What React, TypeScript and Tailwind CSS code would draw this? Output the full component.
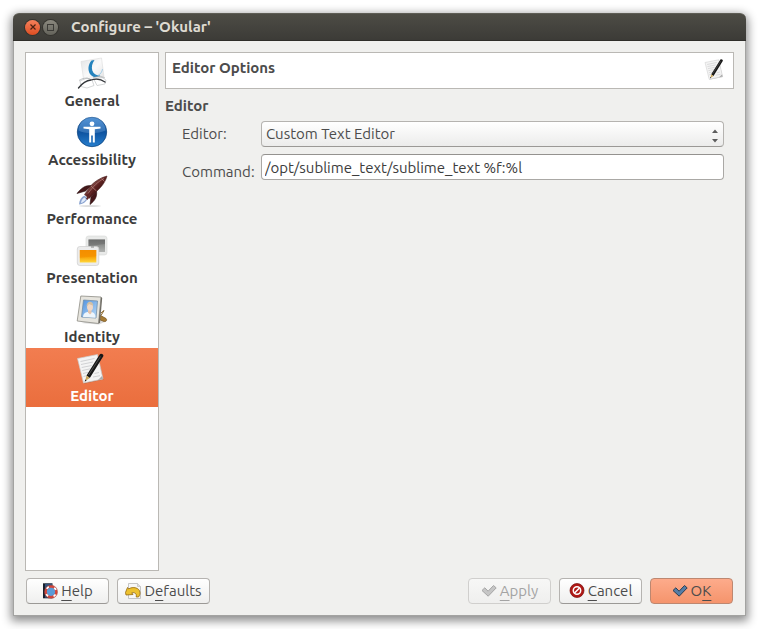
import { useState, type ReactNode } from 'react';

function OkularIcon() {
  return (
    <svg viewBox="0 0 32 32" className="size-8 overflow-visible" aria-hidden="true">
      <defs>
        <linearGradient id="okPage" x1="0" y1="0" x2="1" y2="1">
          <stop offset="0" stopColor="#e3e4e5" />
          <stop offset=".5" stopColor="#fafafa" />
          <stop offset="1" stopColor="#dfe0e1" />
        </linearGradient>
      </defs>
      <path d="M5 4.500 25.500 1l2.500 19-20 5z" fill="url(#okPage)" stroke="#dcdcdc" strokeWidth=".6" />
      <path d="M15.500 3.500C12 7.500 11.500 13 14 17c2.500 3.600 6.500 4 10.500 1.500-4 .2-7-1.500-8.200-5-1-3.200-.3-7 2.200-10.500z" fill="#2583bd" />
      <path d="M22 18.500c2.500-1.500 4-3.500 4.500-6.500" fill="none" stroke="#8fc3e2" strokeWidth=".8" />
      <path d="M4 24l7-3 5 2 2 5.500-7 2.500-6-1.500zM18 22.500l8-2 4 2.500-1 4-8 1.500z" fill="#fff" fillOpacity=".6" stroke="#c3c5c7" strokeWidth=".7" />
      <path d="M2.500 31c3.500-4.500 7.500-7.500 12.500-8 5-1.500 10-1 14 2" fill="none" stroke="#33363a" strokeWidth="1.300" strokeLinecap="round" />
      <path d="M3 23.500c4-2.500 7-3 11-1.500M17 21c4-2 8-2 12 0" fill="none" stroke="#a5a7a9" strokeWidth=".7" />
    </svg>
  );
}

function AccessibilityIcon() {
  return (
    <svg viewBox="0 0 32 32" className="size-8" aria-hidden="true">
      <defs>
        <linearGradient id="accDisc" x1="0" y1="0" x2="0" y2="1">
          <stop offset="0" stopColor="#3b83cd" />
          <stop offset=".5" stopColor="#0d529f" />
          <stop offset="1" stopColor="#277fce" />
        </linearGradient>
      </defs>
      <circle cx="16" cy="16" r="14.700" fill="url(#accDisc)" stroke="#114781" strokeWidth=".8" />
      <path d="M2.500 14.500a13.500 13.500 0 0 1 27 0c-6 3-20 4-27 0z" fill="#8dbdec" fillOpacity=".3" />
      <circle cx="16" cy="7.800" r="2.400" fill="#fff" />
      <path d="M7.500 10.700h17v1.700l-5.700.8v13.200h-2V19.500h-1.600v6.900h-2V13.200l-5.700-.8z" fill="#fff" />
    </svg>
  );
}

function RocketIcon() {
  return (
    <svg viewBox="0 0 32 32" className="size-8" aria-hidden="true">
      <defs>
        <linearGradient id="rocketBody" x1="0" y1="0" x2="1" y2="1">
          <stop offset=".2" stopColor="#a8736d" />
          <stop offset=".5" stopColor="#5e2322" />
          <stop offset=".8" stopColor="#260a0a" />
        </linearGradient>
      </defs>
      <ellipse cx="14" cy="31" rx="11" ry=".8" fill="#000" fillOpacity=".18" />
      <path d="M15.500 10.500C9 10 5 13.500 1 18.500l8.500-2.500zM20.500 16c1 6-2 10-6.500 13.500L15 22z" fill="#451719" stroke="#260b0b" strokeWidth=".6" />
      <path d="M8.500 20.500l3 3c-1 3-4 5.500-8.500 6 .3-4 2-7.500 5.500-9z" fill="#8ba4d0" />
      <path d="M8.500 22.500l1.500 1.500c-1 2-3 3.500-5 4 .2-2.500 1.500-4.500 3.500-5.500z" fill="#e1ebfb" />
      <path d="M31 1c-6.500 1.500-12.500 5.500-16.500 10L8.500 19.500l4.500 4 7.500-7C25.500 12 29.500 7 31 1z" fill="url(#rocketBody)" stroke="#3f1717" strokeWidth=".5" />
      <path d="M25.500 3.500l3 3M15 11l5.500 5" stroke="#bd8d86" strokeWidth=".7" />
      <path d="M28 3.500c-6 3-11 8-16 15" stroke="#bd8d86" strokeWidth=".6" fill="none" />
      <path d="M18 13.500l-8 10 1.500 1.500z" fill="#642b2a" />
    </svg>
  );
}

function PresentationIcon() {
  return (
    <svg viewBox="0 0 32 32" className="size-8" aria-hidden="true">
      <defs>
        <linearGradient id="slideGrey" x1="0" y1="0" x2="0" y2="1">
          <stop offset="0" stopColor="#737573" />
          <stop offset="1" stopColor="#b0b2b0" />
        </linearGradient>
        <linearGradient id="slideGold" x1="0" y1="0" x2="0" y2="1">
          <stop offset="0" stopColor="#f49200" />
          <stop offset=".5" stopColor="#f79b00" />
          <stop offset="1" stopColor="#ffd73a" />
        </linearGradient>
      </defs>
      <rect x="10" y="2" width="21" height="19" rx="2.500" fill="#e9eae9" stroke="#d6d8d6" strokeWidth=".6" />
      <rect x="12.500" y="5.500" width="16.500" height="12.500" fill="url(#slideGrey)" />
      <path d="M12.500 12l16.500-2V5.500H12.500z" fill="#5e605e" fillOpacity=".4" />
      <rect x="1.300" y="12.500" width="21.500" height="19" rx="2.500" fill="#ececec" stroke="#cfcfcf" strokeWidth=".7" />
      <rect x="3.800" y="16" width="16.500" height="12.500" fill="url(#slideGold)" />
      <path d="M3.800 24c5-1 11-1 16.500-2v-6H3.800z" fill="#f28600" fillOpacity=".3" />
      <path d="M15 13h3" stroke="#888" strokeWidth="1" />
    </svg>
  );
}

function IdentityIcon() {
  return (
    <svg viewBox="0 0 32 32" className="size-8" aria-hidden="true">
      <defs>
        <linearGradient id="photo" x1="0" y1="0" x2="1" y2="1">
          <stop offset="0" stopColor="#4f91df" />
          <stop offset="1" stopColor="#bcdbf5" />
        </linearGradient>
      </defs>
      <path d="M5 30l18 1.500 8-3.500-6-3z" fill="#000" fillOpacity=".15" />
      <path d="M22 21l8 4.500c1.500 1.500 0 3.500-2 3L22 26z" fill="#a77b34" stroke="#74511b" strokeWidth=".7" />
      <path d="M25 20l3-2.500-3 5" fill="none" stroke="#8a662a" strokeWidth="1" />
      <path d="M4.800 3 25 4l-2.500 26.500L1.200 28z" fill="#e6e4dd" stroke="#8d8b84" strokeWidth=".8" />
      <path d="M25 4l1.200 1L24 30l-1.500.5z" fill="#6f6c64" />
      <path d="M7.500 7l14 1-1.500 17L5.500 24z" fill="url(#photo)" stroke="#718eaa" strokeWidth=".8" />
      <path d="M7 24c0-3 2-4.500 4.500-5l5 .3c2 .8 3 2.500 3 5.500z" fill="#edf5fc" />
      <path d="M12 15.500h3.500V20l-1.500 1.500-2-2z" fill="#e5c4ad" />
      <ellipse cx="14" cy="14" rx="3" ry="3.800" fill="#f1d7c4" />
      <path d="M10.800 13.500c-.8-6 6.500-6.500 6.500-1-2-.3-3-1-4.200-1.500z" fill="#d3c0a4" />
    </svg>
  );
}

function EditorIcon({ small = false }: { small?: boolean }) {
  return (
    <svg viewBox="0 0 32 32" className={small ? 'size-[22px]' : 'size-8'} aria-hidden="true">
      <path d="M3 7 21.500 3l6 24.500L8 31.800z" fill="#000" fillOpacity=".2" />
      <path d="M1.500 6.500 21.500 2.500l5.500 24.500-19.500 4z" fill="#f4f4f4" stroke="#cbcbcb" strokeWidth=".7" />
      <path
        d="M4.500 9.500l14-3M5 12.500l12-2.500M5.700 15.500l10-2M6.300 18.500l8-1.700M7 21.500l5-1.200M7.500 24.500l3-.8M18.500 21.500l4.500-1M17 25l7-1.300"
        stroke="#cccdcf"
        strokeWidth=".9"
      />
      <path d="M27 27l-5 1 4-4z" fill="#aaa" />
      <path d="M10.500 23.500l13.200-21c1-1.600 4.500-.2 3.600 1.800L13.800 26z" fill="#171717" />
      <path d="M12.500 23l12-18.500" stroke="#666" strokeWidth=".7" />
      <path d="M10.500 23.500l3.300 2.500-4.600 3z" fill="#c7a65d" />
      <path d="M8.700 29.800l.5-2.300 1.500 1z" fill="#222" />
    </svg>
  );
}

function HelpIcon() {
  return (
    <svg viewBox="0 0 16 16" className="size-4" aria-hidden="true">
      <path d="M1 .3h9.500v15H1z" fill="#18202e" />
      <path d="M3 .8h7v14H3z" fill="#34537b" />
      <circle cx="9" cy="8.800" r="5" fill="#5a9bd8" />
      <circle cx="9" cy="8.800" r="5.300" fill="none" stroke="#d3463b" strokeWidth="2.400" />
      <circle cx="9" cy="8.800" r="5.300" fill="none" stroke="#fff" strokeWidth="1.900" strokeDasharray="2.600 5.725" strokeDashoffset="-2.860" />
      <circle cx="9" cy="8.800" r="6.600" fill="none" stroke="#a2453e" strokeWidth=".5" />
    </svg>
  );
}

function DefaultsIcon() {
  return (
    <svg viewBox="0 0 16 16" className="size-4" aria-hidden="true">
      <path d="M3.500.5h9l3 3v12h-12z" fill="#f7f7f7" stroke="#b8b8b8" strokeWidth=".8" />
      <path d="M12.500.5v3h3" fill="#ddd" stroke="#b8b8b8" strokeWidth=".6" />
      <path
        d="M.5 9.500l2-5 1.200 1.400c4-2.600 10.800-1.400 11.300 3.600.2 1.500-.4 3-1.500 4.500h-2.300c.8-3-1.200-5-4.500-4.200l1.300 1.700-7 .5z"
        fill="#edc12f"
        stroke="#94680b"
        strokeWidth=".8"
        strokeLinejoin="round"
      />
    </svg>
  );
}

function CheckIcon({ muted = false }: { muted?: boolean }) {
  return (
    <svg viewBox="0 0 16 16" className="size-4" aria-hidden="true">
      <path
        d="M1 7.500l2.800-2.700 3.300 3.400L12.500 2.500l2.700 2.400-8 8.300z"
        fill={muted ? '#c6c6c6' : '#557da6'}
        stroke={muted ? '#a6a6a6' : '#2c3d50'}
        strokeWidth="1"
        strokeLinejoin="round"
      />
    </svg>
  );
}

function CancelIcon() {
  return (
    <svg viewBox="0 0 16 16" className="size-4" aria-hidden="true">
      <circle cx="8" cy="7.500" r="7" fill="#b01815" stroke="#780d0b" strokeWidth=".7" />
      <circle cx="8" cy="7.500" r="3.700" fill="none" stroke="#fff" strokeWidth="1.500" />
      <path d="M5.500 10l5-5" stroke="#fff" strokeWidth="1.600" />
    </svg>
  );
}

const pages: { name: string; icon: ReactNode }[] = [
  { name: 'General', icon: <OkularIcon /> },
  { name: 'Accessibility', icon: <AccessibilityIcon /> },
  { name: 'Performance', icon: <RocketIcon /> },
  { name: 'Presentation', icon: <PresentationIcon /> },
  { name: 'Identity', icon: <IdentityIcon /> },
  { name: 'Editor', icon: <EditorIcon /> },
];

const buttonBase = 'flex h-[26px] items-center justify-center gap-[3px] rounded-[4px] border text-[15px] leading-5';
const buttonNormal = 'border-[#b5b3b0] border-b-[#9b9996] bg-linear-to-b from-white to-[#efefee] text-[#4c4c4c]';

function Key({ children }: { children: ReactNode }) {
  return <span className="underline decoration-1 underline-offset-4">{children}</span>;
}

export default function App() {
  const [page, setPage] = useState('Editor');
  const [command, setCommand] = useState('/opt/sublime_text/sublime_text %f:%l');

  return (
    <div className="flex min-h-screen bg-white p-[13px] font-['Ubuntu','Noto_Sans',sans-serif] text-[15px] leading-5 text-[#4c4c4c]">
      <div className="flex min-w-0 flex-1 flex-col rounded-t-[6px] bg-[#f0f0ee] shadow-[0_3px_10px_2px_rgba(0,0,0,0.45)]">
        <header className="flex h-7 shrink-0 items-center rounded-t-[6px] border-t border-b border-t-[#5e5d55] border-b-[#2f2e2a] bg-linear-to-b from-[#4d4c45] to-[#3c3b37] pl-3">
          <button
            type="button"
            aria-label="Close"
            className="flex size-[15px] items-center justify-center rounded-full bg-linear-to-b from-[#f6805a] to-[#dd4d20] ring-1 ring-[#34332e]"
          >
            <svg viewBox="0 0 8 8" className="size-2" aria-hidden="true">
              <path d="M1.500 1.500l5 5m0-5l-5 5" stroke="#4b2213" strokeWidth="1.200" />
            </svg>
          </button>
          <button
            type="button"
            aria-label="Maximize"
            className="ml-[3px] flex size-[15px] items-center justify-center rounded-full bg-linear-to-b from-[#8b897f] to-[#64635b] ring-1 ring-[#34332e]"
          >
            <svg viewBox="0 0 7 7" className="size-[7px]" aria-hidden="true">
              <rect x=".5" y=".5" width="6" height="6" fill="none" stroke="#3c3b37" />
            </svg>
          </button>
          <h1 className="ml-[13px] text-[15px] font-bold text-[#dfdbd2]">Configure – 'Okular'</h1>
        </header>

        <div className="flex flex-1 flex-col gap-[7px] border-x border-b border-[#a3a3a1] px-[11px] pt-[11px] pb-[11px]">
          <div className="flex flex-1 gap-[6px]">
            <nav className="flex w-[134px] shrink-0 flex-col border border-[#bab8b4] bg-white" aria-label="Pages">
              {pages.map((item) => (
                <button
                  key={item.name}
                  type="button"
                  onClick={() => setPage(item.name)}
                  aria-current={item.name === page ? 'page' : undefined}
                  className={
                    item.name === page
                      ? 'flex flex-col items-center gap-0.5 bg-linear-to-b from-[#f27d50] to-[#ea6e3d] pt-1 pb-px font-bold text-white'
                      : 'flex flex-col items-center gap-0.5 pt-1 pb-px font-bold text-[#3c3c3c]'
                  }
                >
                  {item.icon}
                  <span>{item.name}</span>
                </button>
              ))}
            </nav>

            <main className="min-w-0 flex-1">
              <div className="flex h-[37px] items-start justify-between border border-[#bab8b4] bg-white pt-[5px] pr-[7px] pl-[6px]">
                <h2 className="font-bold">Editor Options</h2>
                <EditorIcon small />
              </div>

              <h3 className="mt-[7px] font-bold">Editor</h3>
              <form className="mt-[5px] mr-[10px] ml-[17px] grid grid-cols-[72px_1fr] gap-x-[7px] gap-y-[7px]">
                <label htmlFor="editor" className="pt-[3px]">
                  Editor:
                </label>
                <div className="relative">
                  <select
                    id="editor"
                    className="block h-[26px] w-full appearance-none rounded-[4px] border border-[#b5b3b0] border-b-[#9b9996] bg-linear-to-b from-white to-[#ececeb] pr-6 pl-1"
                  >
                    <option>Custom Text Editor</option>
                  </select>
                  <svg viewBox="0 0 6 14" className="pointer-events-none absolute top-2 right-[6px] h-[14px] w-[6px]" aria-hidden="true">
                    <path d="M0 4l3-3.500L6 4zM0 10l3 3.500L6 10z" fill="#5d5d5d" />
                  </svg>
                </div>
                <label htmlFor="command" className="pt-2">
                  Command:
                </label>
                <input
                  id="command"
                  type="text"
                  value={command}
                  onChange={(event) => setCommand(event.target.value)}
                  className="block h-[26px] w-full rounded-[4px] border border-[#aaa8a5] border-t-[#94928f] bg-white px-[3px] text-[#3c3c3c] outline-none"
                />
              </form>
            </main>
          </div>

          <footer className="flex flex-wrap gap-2 px-px">
            <button type="button" className={`${buttonBase} ${buttonNormal} w-[83px]`}>
              <HelpIcon />
              <span>
                <Key>H</Key>elp
              </span>
            </button>
            <button type="button" className={`${buttonBase} ${buttonNormal} w-[93px]`}>
              <DefaultsIcon />
              <span>
                D<Key>e</Key>faults
              </span>
            </button>
            <button
              type="button"
              disabled
              className={`${buttonBase} ml-auto w-[83px] border-[#d0cfcd] bg-linear-to-b from-[#f7f7f6] to-[#efefee] text-[#a3a3a3]`}
            >
              <CheckIcon muted />
              <span>
                <Key>A</Key>pply
              </span>
            </button>
            <button type="button" className={`${buttonBase} ${buttonNormal} w-[83px]`}>
              <CancelIcon />
              <span>
                <Key>C</Key>ancel
              </span>
            </button>
            <button
              type="button"
              className={`${buttonBase} w-[83px] border-[#bd8770] bg-linear-to-b from-[#fdab8b] to-[#f5946c] text-[#4c4c4c]`}
            >
              <CheckIcon />
              <span>
                O<Key>K</Key>
              </span>
            </button>
          </footer>
        </div>
      </div>
    </div>
  );
}
